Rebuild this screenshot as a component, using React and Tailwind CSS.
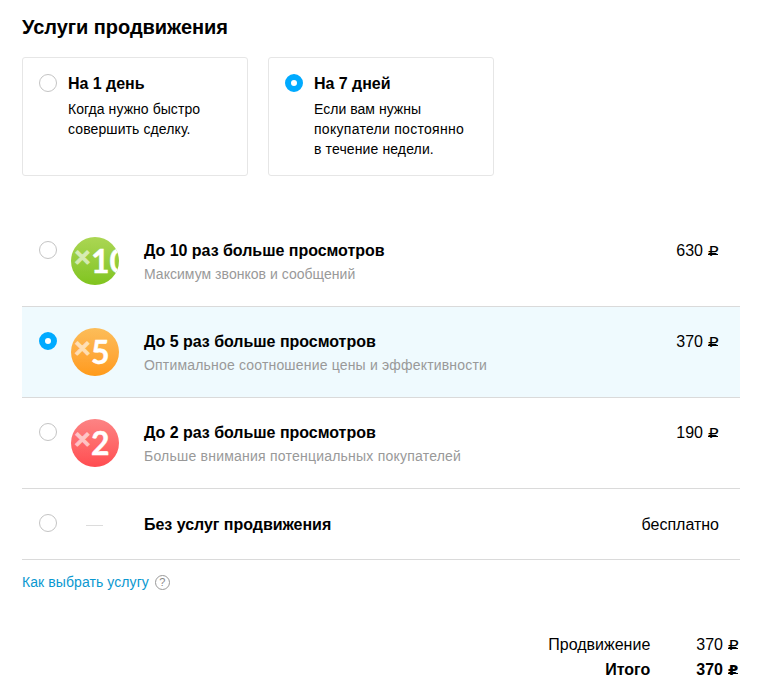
import { useState } from 'react';

const periods = [
  {
    id: 'day', title: 'На 1 день',
    lines: [['Когда нужно быстро', 'tracking-[0.06px]'], ['совершить сделку.', 'tracking-[0.1px]']],
  },
  {
    id: 'week', title: 'На 7 дней',
    lines: [['Если вам нужны', 'tracking-[0.03px]'], ['покупатели постоянно', 'tracking-[0.28px]'], ['в течение недели.', 'tracking-[0.12px]']],
  },
];

const services = [
  {
    id: 'x10', factor: 10, price: 630, badge: 'from-[#abd653] to-[#80c41c]', tracking: 'tracking-[0.03px]',
    title: 'До 10 раз больше просмотров', text: 'Максимум звонков и сообщений',
  },
  {
    id: 'x5', factor: 5, price: 370, badge: 'from-[#fcbd59] to-[#ff9a17]', tracking: 'tracking-[0.18px]',
    title: 'До 5 раз больше просмотров', text: 'Оптимальное соотношение цены и эффективности',
  },
  {
    id: 'x2', factor: 2, price: 190, badge: 'from-[#fc8384] to-[#ff4b50]', tracking: 'tracking-[0.22px]',
    title: 'До 2 раз больше просмотров', text: 'Больше внимания потенциальных покупателей',
  },
];

function Radio({ name, checked, onChange, label }) {
  return (
    <input
      type="radio" name={name} checked={checked} onChange={onChange} aria-label={label}
      className="block shrink-0 appearance-none w-[18px] h-[18px] rounded-full border border-[#c4c4c4] bg-white checked:border-6 checked:border-[#0af]"
    />
  );
}

function Price({ value, bold }) {
  return (
    <span className={`flex items-baseline justify-end whitespace-nowrap ${bold ? 'font-bold' : ''}`}>
      {value}
      <span className="relative ml-[5px] w-[11px] text-left leading-none">
        <span className={`inline-block origin-bottom-left font-['DejaVu_Sans'] text-[14px] leading-none ${bold ? 'scale-x-105' : 'scale-x-120'}`}>₽</span>
        {/* the rouble's crossbar runs the full width of the sign */}
        <span className="absolute left-0 bottom-[4px] w-[10px] h-px bg-black" />
      </span>
    </span>
  );
}

function Badge({ factor, className }) {
  return (
    <div className={`relative w-12 h-12 shrink-0 rounded-full overflow-hidden bg-linear-to-b font-['Lato'] font-bold text-white ${className}`}>
      <span className="absolute left-[3px] top-[2px] text-[29px] leading-[34px] opacity-60 [-webkit-text-stroke:1px_white]">×</span>
      <span className="absolute left-[20px] top-[7px] text-[32px] leading-[34px] [-webkit-text-stroke:0.4px_white]">{factor}</span>
    </div>
  );
}

export default function App() {
  const [period, setPeriod] = useState('week');
  const [service, setService] = useState('x5');
  const total = services.find(s => s.id === service)?.price ?? 0;

  return (
    <div className="w-[757px] h-[694px] overflow-hidden bg-white pl-[22px] pr-[17px] pt-[14px] font-['Liberation_Sans',Arial,sans-serif] text-base leading-5 text-black">
      <h1 className="text-[20px] leading-[26px] font-bold tracking-[-0.04px]">Услуги продвижения</h1>

      <div className="mt-[17px] flex gap-5">
        {periods.map(p => (
          <label key={p.id} className="flex w-[226px] h-[119px] rounded-[3px] border border-[#e6e6e6] pl-4 pt-4">
            <Radio name="period" checked={period === p.id} onChange={() => setPeriod(p.id)} label={p.title} />
            <div className="ml-[11px]">
              <div className="font-bold tracking-[-0.04px]">{p.title}</div>
              <div className="mt-[5px] text-[14px] leading-5">
                {p.lines.map(([line, tracking]) => <div key={line} className={tracking}>{line}</div>)}
              </div>
            </div>
          </label>
        ))}
      </div>

      <div className="mt-10">
        {services.map(s => (
          <label
            key={s.id}
            className={`flex items-start h-[91px] border-b border-[#dadada] pl-[17px] pr-[21px] ${service === s.id ? 'bg-[#effafe]' : ''}`}
          >
            <div className="pt-[25px]">
              <Radio name="service" checked={service === s.id} onChange={() => setService(s.id)} label={s.title} />
            </div>
            <div className="ml-[14px] pt-[21px]">
              <Badge factor={s.factor} className={s.badge} />
            </div>
            <div className="ml-[25px] pt-[25px] flex-1">
              <div className="font-bold tracking-[-0.03px]">{s.title}</div>
              <div className={`mt-[3px] text-[14px] text-[#999] ${s.tracking}`}>{s.text}</div>
            </div>
            <div className="pt-[25px]"><Price value={s.price} /></div>
          </label>
        ))}
        <label className="flex items-start h-[71px] border-b border-[#dadada] pl-[17px] pr-[21px]">
          <div className="pt-[25px]">
            <Radio name="service" checked={service === 'none'} onChange={() => setService('none')} label="Без услуг продвижения" />
          </div>
          <div className="ml-[29px] mt-9 w-[17px] h-px bg-[#dcdcdc]" />
          <div className="ml-[41px] pt-[26px] flex-1 font-bold tracking-[-0.03px]">Без услуг продвижения</div>
          <div className="pt-[26px]">бесплатно</div>
        </label>
      </div>

      <div className="mt-3 flex items-center text-[14px] text-[#0a98d0]">
        <span className="tracking-[0.08px]">Как выбрать услугу</span>
        <span className="ml-[6px] flex items-center justify-center w-[15px] h-[15px] rounded-full border border-[#999] text-[11px] leading-none text-[#888]">?</span>
      </div>

      <div className="mt-10 mr-px ml-auto w-fit grid grid-cols-[auto_auto] gap-x-[46px] leading-[25px] text-right">
        <span>Продвижение</span>
        <Price value={total} />
        <span className="font-bold">Итого</span>
        <Price value={total} bold />
      </div>
    </div>
  );
}
